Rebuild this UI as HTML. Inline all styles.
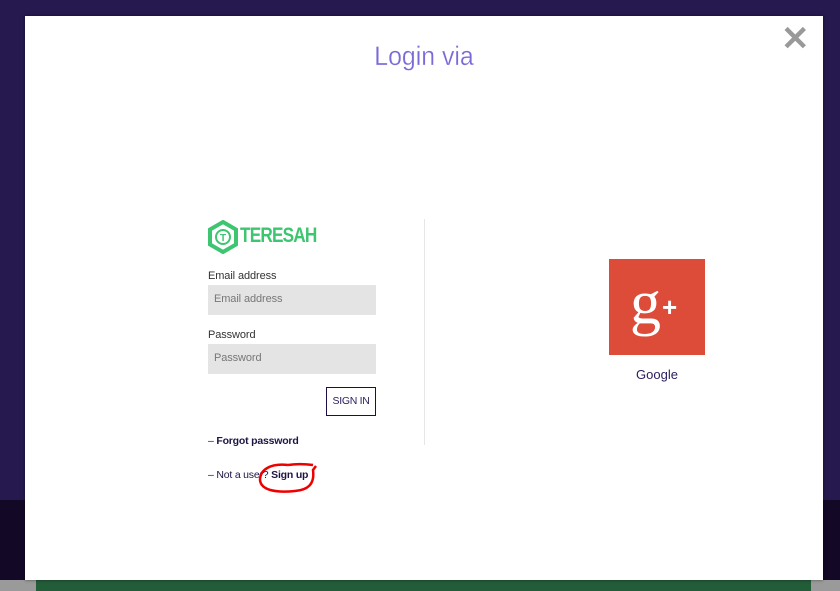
<!DOCTYPE html>
<html><head><style>
*{margin:0;padding:0;box-sizing:border-box}
body{width:840px;height:591px;overflow:hidden;position:relative;font-family:"Liberation Sans",sans-serif;background:#25194f}
.bgbot{position:absolute;left:0;top:500px;width:840px;height:91px;background:#130826}
.strip{position:absolute;left:0;top:580px;width:840px;height:11px;background:#9a9a9a}
.green{position:absolute;left:36px;top:580px;width:775px;height:11px;background:#235c39}
.modal{position:absolute;left:25px;top:16px;width:798px;height:564px;background:#fff;box-shadow:0 0 3px rgba(0,0,0,.5)}
.abs{position:absolute}
h1{position:absolute;left:0;width:798px;top:25px;text-align:center;font-weight:normal;font-size:27px;color:#7a6ad8;transform:scaleX(.92);-webkit-text-stroke:0.3px #fff}
.lbl{font-size:11px;color:#333;letter-spacing:-0.1px}
.inp{background:#e4e4e4;width:168px;height:30px;font-size:11px;color:#777;padding:8px 6px;letter-spacing:-0.1px}
.btn{border:1px solid #1d0f45;width:50px;height:29px;font-size:10.5px;color:#2b1d5e;text-align:center;line-height:27px;letter-spacing:-0.3px}
.lnk{font-size:10.5px;color:#1d1444;letter-spacing:-0.2px}
</style></head><body>
<div class="bgbot"></div>
<div class="strip"></div><div class="green"></div>
<div class="modal">
<h1>Login via</h1>
<div class="abs" style="left:756px;top:8px;color:#999;font-size:34px;font-weight:bold;line-height:30px">✕</div>
<svg class="abs" style="left:182px;top:204px" width="32" height="34" viewBox="0 0 32 34"><polygon points="16,2 29,9.5 29,24.5 16,32 3,24.5 3,9.5" fill="none" stroke="#3ec571" stroke-width="4"/><circle cx="16" cy="17" r="7" fill="none" stroke="#3ec571" stroke-width="2"/><text x="16" y="21" font-size="10" font-weight="bold" text-anchor="middle" fill="#3ec571" font-family="Liberation Sans">T</text></svg>
<div class="abs" style="left:215px;top:208px;font-size:21px;font-weight:bold;color:#3ec571;letter-spacing:-1px;transform:scaleX(.82);transform-origin:left">TERESAH</div>
<div class="abs lbl" style="left:183px;top:254px">Email address</div>
<div class="abs inp" style="left:183px;top:269px">Email address</div>
<div class="abs lbl" style="left:183px;top:313px">Password</div>
<div class="abs inp" style="left:183px;top:328px">Password</div>
<div class="abs btn" style="left:301px;top:371px">SIGN IN</div>
<div class="abs lnk" style="left:183px;top:419px">– <b>Forgot password</b></div>
<div class="abs lnk" style="left:183px;top:453px">– Not a user? <b>Sign up</b></div>
<svg class="abs" style="left:230px;top:444px" width="70" height="34"><path d="M33 5 C15 3 5 10 5 20 C6 30 20 33 40 31 C52 30 60 25 58 10 L61 6 M58 5 C50 4 40 4 33 5" fill="none" stroke="#e00" stroke-width="2.5"/></svg>
<div class="abs" style="left:399px;top:203px;width:1px;height:226px;background:#e6e6e6"></div>
<div class="abs" style="left:584px;top:243px;width:96px;height:96px;background:#dd4b39"></div>
<div class="abs" style="left:605px;top:252px;font-family:'Liberation Serif',serif;font-size:62px;color:#fff">g</div>
<div class="abs" style="left:637px;top:276px;font-size:26px;font-weight:bold;color:#fff">+</div>
<div class="abs" style="left:584px;top:351px;width:96px;text-align:center;font-size:13px;color:#2b1d5e">Google</div>
</div>
</body></html>
